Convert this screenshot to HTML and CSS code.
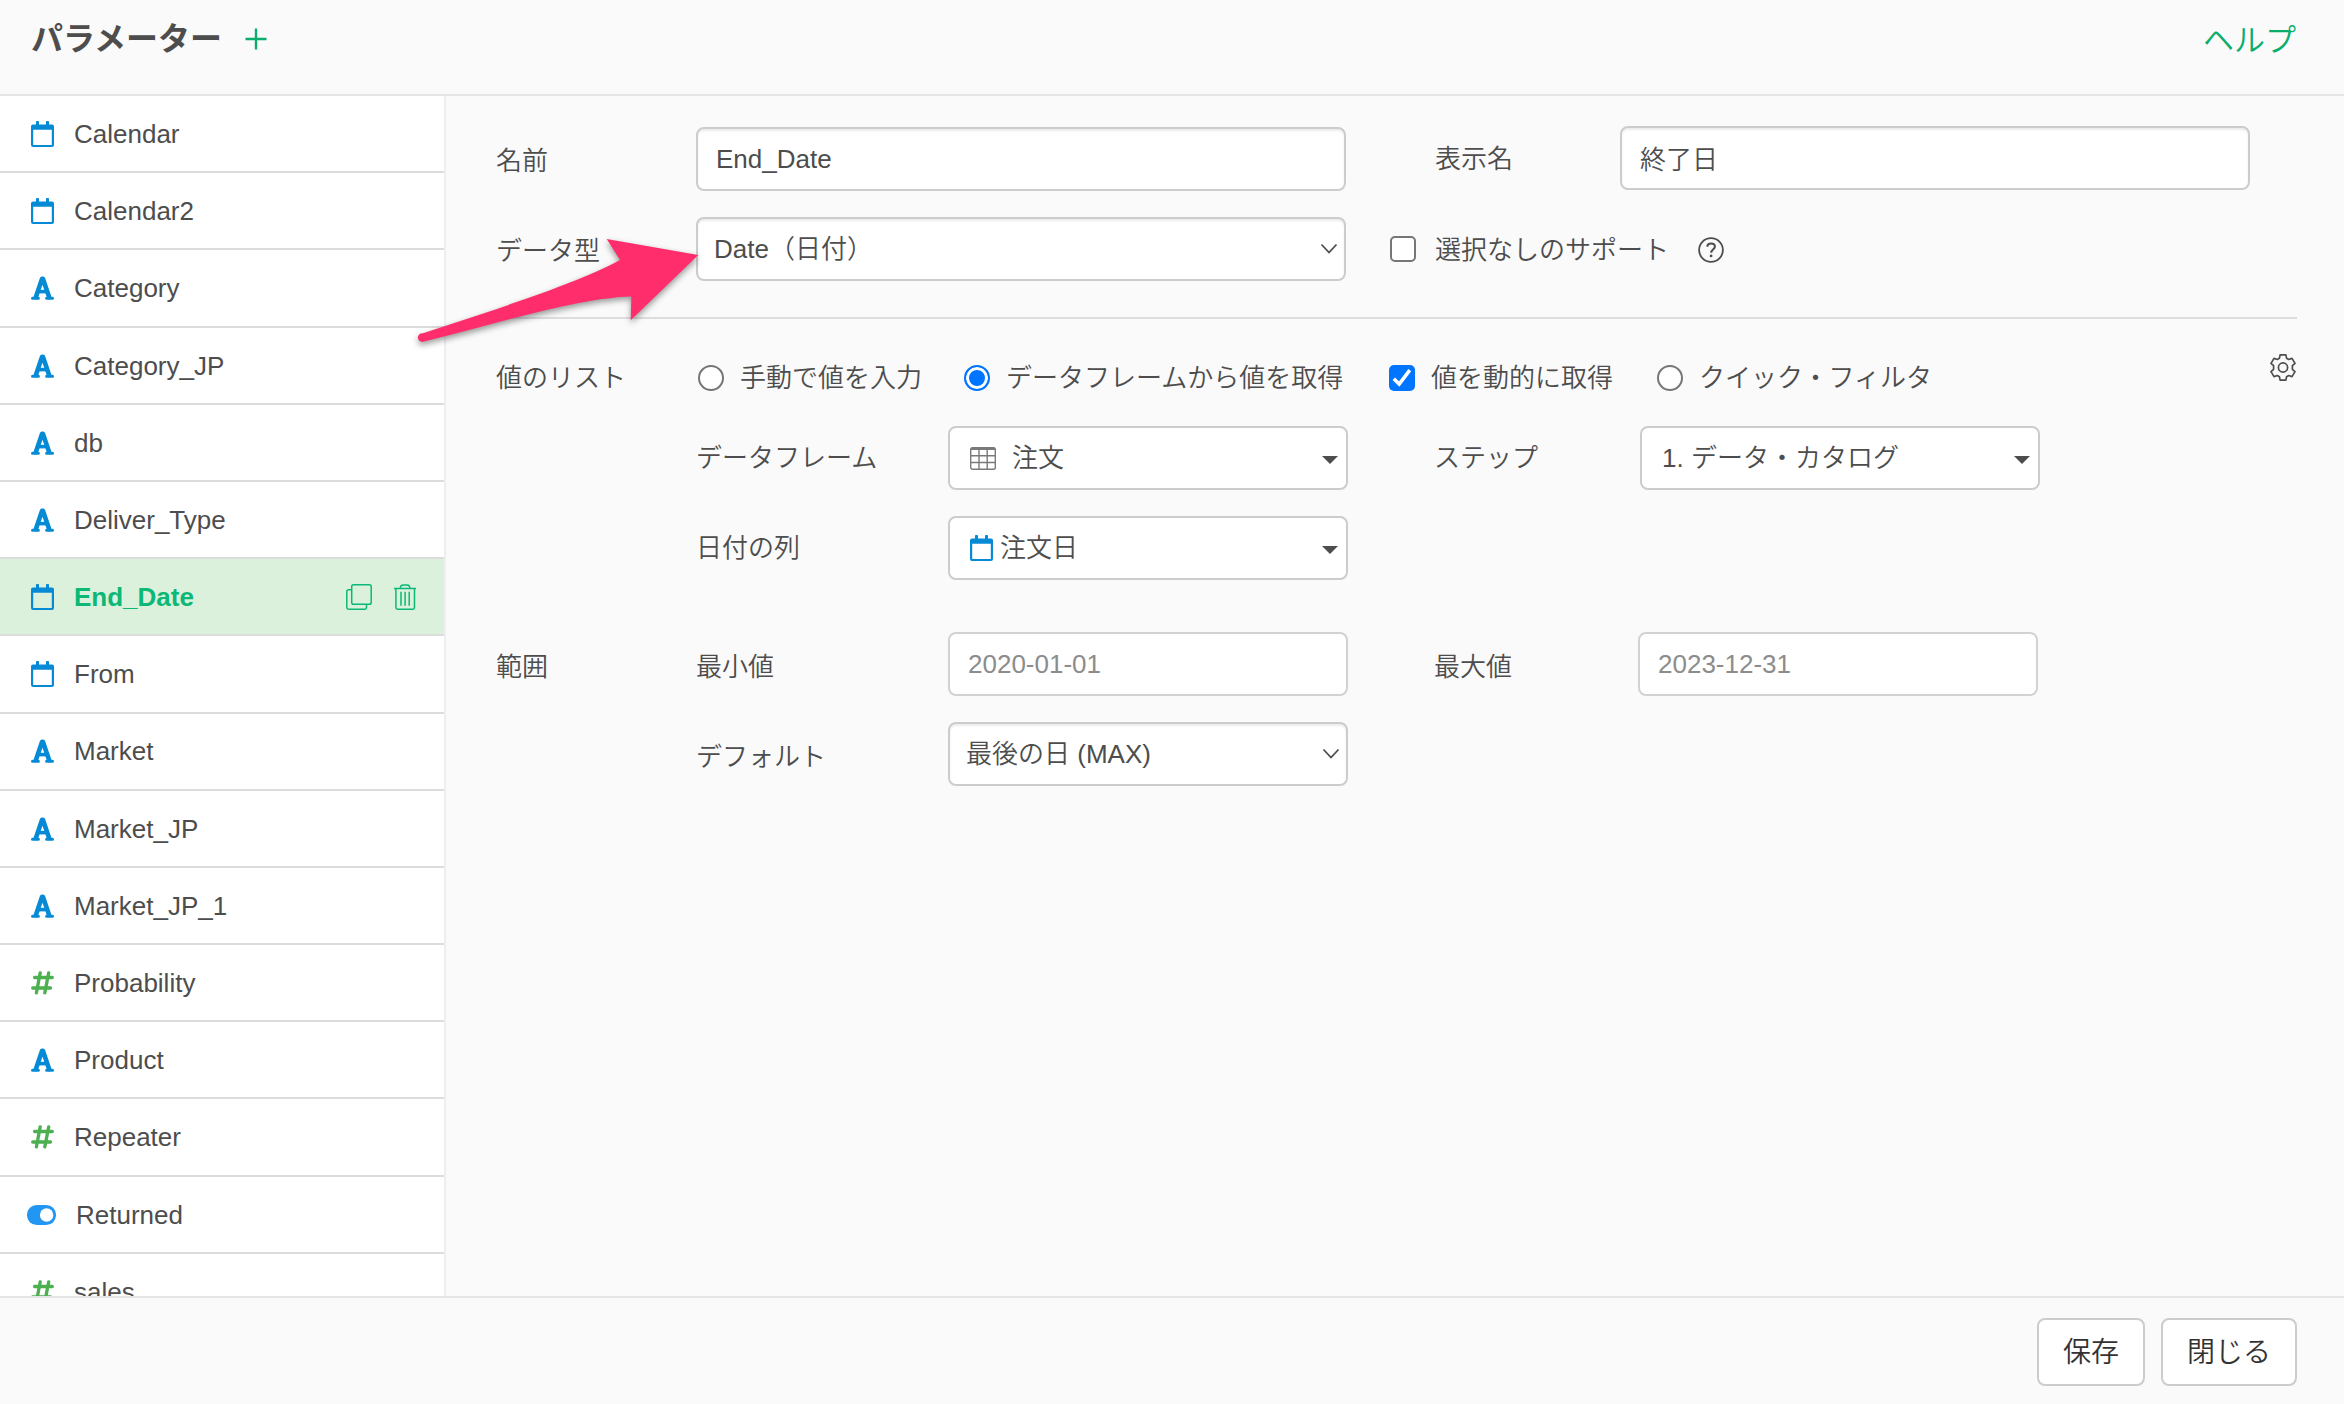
FILE: index.html
```html
<!DOCTYPE html>
<html lang="ja">
<head>
    <meta charset="UTF-8">
    <meta name="viewport" content="width=device-width, initial-scale=1.0">
    <title>パラメーター</title>
    <link rel="stylesheet" href="styles.css">
</head>
<body>
    <!-- アイコン -->
    <svg class="icon-defs" width="0" height="0">
        <symbol id="icon-date" viewBox="0 0 23 26">
            <path fill="currentColor" fill-rule="evenodd" d="M5 3.5V1.2a1.5 1.5 0 0 1 3 0V3.5H15V1.2a1.5 1.5 0 0 1 3 0V3.5H21a2 2 0 0 1 2 2V24a2 2 0 0 1-2 2H2a2 2 0 0 1-2-2V5.500a2 2 0 0 1 2-2ZM2.200 8.700V24H20.800V8.700Z"/>
        </symbol>
        <symbol id="icon-text" viewBox="0 0 23 24">
            <g fill="none" stroke="currentColor" stroke-linecap="round" stroke-linejoin="round">
                <path stroke-width="4.600" d="M4.900 21L11 2.900H12L18.100 21"/>
                <path stroke-width="3.600" stroke-linecap="butt" d="M7 15.600H16"/>
                <path stroke-width="3" d="M1.500 22.200H7.400M15.600 22.200H21.500"/>
            </g>
        </symbol>
        <symbol id="icon-number" viewBox="0 0 23 24">
            <path fill="none" stroke="currentColor" stroke-width="3.300" stroke-linecap="round" d="M3.600 6.500H21.300M1.700 17H19.500M9.200 1.900L5.400 21.900M17.700 1.900L13.800 21.900"/>
        </symbol>
        <symbol id="icon-toggle" viewBox="0 0 29 20">
            <rect width="29" height="20" rx="9.800" fill="currentColor"/>
            <circle cx="19.600" cy="10" r="6.700" fill="#fff"/>
        </symbol>
        <symbol id="icon-copy" viewBox="0 0 26 26">
            <g fill="none" stroke="currentColor" stroke-width="1.500">
                <rect x="5.700" y="0.800" width="19.500" height="19.500" rx="1.800"/>
                <path d="M5.700 5.700H2.500a1.700 1.700 0 0 0-1.700 1.700V23.500a1.700 1.700 0 0 0 1.700 1.700H18.800a1.700 1.700 0 0 0 1.700-1.700V20.300"/>
            </g>
        </symbol>
        <symbol id="icon-trash" viewBox="0 0 22 26">
            <path fill="none" stroke="currentColor" stroke-width="1.500" d="M0 4.400H22M1.900 4.400V23.500a1.700 1.700 0 0 0 1.700 1.700H18.800a1.700 1.700 0 0 0 1.700-1.700V4.400M6.300 4.400C6.300 2 7.500 0.900 9.200 0.900H13C14.700 0.900 15.900 2 15.900 4.400M7 7.800V21.800M11.100 7.800V21.800M15.200 7.800V21.800"/>
        </symbol>
        <symbol id="icon-chevron" viewBox="0 0 18 12">
            <path fill="none" stroke="currentColor" stroke-width="1.800" d="M1.500 1.500L9 9.500L16.500 1.500"/>
        </symbol>
        <symbol id="icon-caret" viewBox="0 0 16 8">
            <path fill="currentColor" d="M0 0H16L8 8Z"/>
        </symbol>
    </svg>

    <header class="header">
        <h1 class="title">パラメーター</h1>
        <svg class="add" viewBox="0 0 22 22"><path stroke="currentColor" stroke-width="2.400" d="M0.500 11H21.500M11 0.500V21.500"/></svg>
        <a class="help-link">ヘルプ</a>
    </header>

    <div class="content">
        <ul class="parameters">
            <li><svg class="icon date"><use href="#icon-date"/></svg>Calendar</li>
            <li><svg class="icon date"><use href="#icon-date"/></svg>Calendar2</li>
            <li><svg class="icon text"><use href="#icon-text"/></svg>Category</li>
            <li><svg class="icon text"><use href="#icon-text"/></svg>Category_JP</li>
            <li><svg class="icon text"><use href="#icon-text"/></svg>db</li>
            <li><svg class="icon text"><use href="#icon-text"/></svg>Deliver_Type</li>
            <li class="selected">
                <svg class="icon date"><use href="#icon-date"/></svg>End_Date
                <span class="actions">
                    <svg class="copy"><use href="#icon-copy"/></svg>
                    <svg class="trash"><use href="#icon-trash"/></svg>
                </span>
            </li>
            <li><svg class="icon date"><use href="#icon-date"/></svg>From</li>
            <li><svg class="icon text"><use href="#icon-text"/></svg>Market</li>
            <li><svg class="icon text"><use href="#icon-text"/></svg>Market_JP</li>
            <li><svg class="icon text"><use href="#icon-text"/></svg>Market_JP_1</li>
            <li><svg class="icon number"><use href="#icon-number"/></svg>Probability</li>
            <li><svg class="icon text"><use href="#icon-text"/></svg>Product</li>
            <li><svg class="icon number"><use href="#icon-number"/></svg>Repeater</li>
            <li><svg class="icon toggle"><use href="#icon-toggle"/></svg>Returned</li>
            <li><svg class="icon number"><use href="#icon-number"/></svg>sales</li>
        </ul>

        <main class="form">
            <section class="basic">
                <div class="column">
                    <div class="row">
                        <label>名前</label>
                        <input class="field" type="text" value="End_Date">
                    </div>
                    <div class="row">
                        <label>データ型</label>
                        <div class="field select">Date（日付）<svg class="chevron"><use href="#icon-chevron"/></svg></div>
                    </div>
                </div>
                <div class="column display">
                    <div class="row">
                        <label>表示名</label>
                        <input class="field" type="text" value="終了日">
                    </div>
                    <div class="row support">
                        <input class="check" type="checkbox">
                        <span>選択なしのサポート</span>
                        <svg class="question" viewBox="0 0 26 26">
                            <g fill="none" stroke="currentColor" stroke-width="1.800">
                                <circle cx="13" cy="13" r="11.900"/>
                                <path stroke-width="2" d="M9.300 9.800C9.400 7.700 11 6.600 13.100 6.600C15.300 6.600 16.900 7.800 16.900 9.700C16.900 12.200 13.200 12.500 13.200 15.800"/>
                            </g>
                            <circle cx="13.100" cy="18.900" r="1.400" fill="currentColor"/>
                        </svg>
                    </div>
                </div>
            </section>

            <section class="values">
                <div class="row sources">
                    <label>値のリスト</label>
                    <input class="radio" type="radio" name="source">
                    <span class="manual">手動で値を入力</span>
                    <input class="radio" type="radio" name="source" checked>
                    <span class="frame">データフレームから値を取得</span>
                    <span class="check checked"><svg viewBox="0 0 26 26"><path fill="none" stroke="#fff" stroke-width="3.600" d="M4.800 13.800L10.200 19L20.800 5.200"/></svg></span>
                    <span class="dynamic">値を動的に取得</span>
                    <input class="radio" type="radio" name="source">
                    <span>クイック・フィルタ</span>
                    <svg class="gear" viewBox="0 0 26 27">
                        <g fill="none" stroke="currentColor" stroke-width="1.700" stroke-linejoin="round">
                            <circle cx="13" cy="13.500" r="4.600"/>
                            <path d="M10.100 0.900H15.900L16.600 4.300L18.700 5.500L22 4.400L25 9.400L22.400 11.700V15.300L25 17.600L22 22.600L18.700 21.500L16.600 22.700L15.900 26.100H10.100L9.400 22.700L7.300 21.500L4 22.600L1 17.600L3.600 15.300V11.700L1 9.400L4 4.400L7.300 5.500L9.400 4.300Z"/>
                        </g>
                    </svg>
                </div>
                <div class="grid">
                    <label class="start">データフレーム</label>
                    <div class="field picker">
                        <svg class="table" viewBox="0 0 26 23">
                            <path fill="none" stroke="currentColor" stroke-width="1.400" d="M2.500 0.700H23.500a1.800 1.800 0 0 1 1.800 1.800V20.500a1.800 1.800 0 0 1-1.800 1.800H2.500a1.800 1.800 0 0 1-1.800-1.800V2.500a1.800 1.800 0 0 1 1.800-1.800ZM9 2V22M17.200 2V22M1 8.800H25M1 15.500H25"/>
                            <path fill="currentColor" d="M1 3V2a1.500 1.500 0 0 1 1.500-1.500H23.500a1.500 1.500 0 0 1 1.500 1.500V3Z"/>
                        </svg>注文<svg class="caret"><use href="#icon-caret"/></svg>
                    </div>
                    <label>ステップ</label>
                    <div class="field picker step">1. データ・カタログ<svg class="caret"><use href="#icon-caret"/></svg></div>
                    <label class="start">日付の列</label>
                    <div class="field picker"><svg class="icon date"><use href="#icon-date"/></svg>注文日<svg class="caret"><use href="#icon-caret"/></svg></div>
                </div>
            </section>

            <section class="grid range">
                <label>範囲</label>
                <label>最小値</label>
                <input class="field" type="text" value="2020-01-01" disabled>
                <label>最大値</label>
                <input class="field max" type="text" value="2023-12-31" disabled>
                <label class="start">デフォルト</label>
                <div class="field select">最後の日 (MAX)<svg class="chevron"><use href="#icon-chevron"/></svg></div>
            </section>
        </main>
    </div>

    <footer class="footer">
        <button class="button">保存</button>
        <button class="button">閉じる</button>
    </footer>

    <!-- データ型を指す矢印 -->
    <svg class="arrow" viewBox="0 0 290 100">
        <path fill="#ff2d6c" d="M282.300 25L190.700 9L204 30C160 54 80 79 7 103.300L4.500 103.600A3.900 3.900 0 0 0 8 111.500C80 94 160 68 215.300 66.500L214.700 90.300Z"/>
    </svg>
</body>
</html>
```

FILE: styles.css
```css
* {
    box-sizing: border-box;
}

body {
    margin: 0;
    height: 1404px;
    display: flex;
    flex-direction: column;
    overflow: hidden;
    background-color: #fafafa;
    color: #4d4d4d;
    font-family: "Liberation Sans", "Noto Sans CJK JP", sans-serif;
    font-size: 26px;
    font-weight: 350;
    line-height: 38px;
}

.icon-defs {
    position: absolute;
}

.header {
    flex: none;
    display: flex;
    height: 96px;
    padding: 20px 48px 0 31px;
    border-bottom: 2px solid #e5e5e5;
}

.title {
    margin: 0;
    font-size: 32px;
    font-weight: bold;
}

.add {
    width: 22px;
    height: 22px;
    margin: 8px 0 0 23px;
    color: #0aad6c;
}

.help-link {
    margin: 2px 0 0 auto;
    font-size: 31px;
    color: #0aad6c;
}

.content {
    flex: none;
    display: flex;
    height: 1200px;
}

.parameters {
    width: 446px;
    margin: 0;
    padding: 0;
    overflow: hidden;
    list-style: none;
    background-color: #fff;
    border-right: 2px solid #eee;
}

.parameters li {
    display: flex;
    align-items: center;
    height: 77.2px;
    padding: 0.8px 0 0 31px;
    border-bottom: 2px solid #dcdcdc;
}

.parameters .selected {
    background-color: #dbf1dc;
    color: #0bb877;
    font-weight: bold;
}

.icon {
    width: 23px;
    height: 24px;
    margin-right: 20px;
}

.date {
    height: 26px;
    color: #068ad6;
}

.text {
    color: #068ad6;
}

.number {
    color: #4caf50;
}

.toggle {
    width: 29px;
    height: 20px;
    margin-left: -4px;
    color: #2196f3;
}

.actions {
    display: flex;
    margin-left: auto;
    padding-right: 28px;
    gap: 22px;
}

.copy {
    width: 26px;
    height: 26px;
}

.trash {
    width: 22px;
    height: 26px;
}

.form {
    flex: 1;
    padding: 30px 47px 0 50px;
}

.basic {
    display: flex;
    gap: 44px;
    height: 193px;
    border-bottom: 2px solid #ddd;
}

.column {
    display: flex;
    flex-direction: column;
    gap: 26px;
    padding-top: 1px;
}

.row {
    display: flex;
    align-items: center;
    height: 64px;
}

.basic label {
    width: 200px;
    padding-top: 3px;
}

.basic .field {
    width: 650px;
}

.display {
    padding-top: 0;
}

.basic .display label {
    width: 230px;
    padding: 1px 0 0 45px;
}

.basic .display .field {
    width: 630px;
    padding-bottom: 2px;
}

.support {
    padding-top: 2px;
}

.display span {
    margin-left: 19px;
    padding-top: 1px;
}

.field {
    display: flex;
    align-items: center;
    height: 64px;
    padding: 0 18px;
    border: 2px solid #ccc;
    border-radius: 8px;
    background-color: #fff;
    box-shadow: inset 0 2px 2px rgba(0, 0, 0, 0.075);
    color: inherit;
    font: inherit;
}

.field:disabled {
    border-color: #d2d2d2;
    box-shadow: none;
    color: #8c8c8c;
}

.select {
    padding: 0 6px 0 16px;
}

.picker {
    padding: 0 8px 0 20px;
    box-shadow: none;
}

.chevron {
    width: 18px;
    height: 12px;
    margin-left: auto;
}

.caret {
    width: 16px;
    height: 8px;
    margin: 3px 0 0 auto;
}

.picker .icon {
    margin-right: 7px;
}

.table {
    width: 26px;
    height: 23px;
    margin-right: 16px;
    color: #7a7a7a;
}

.check,
.radio {
    appearance: none;
    flex: none;
    width: 26px;
    height: 26px;
    margin: 0;
    border: 2px solid #767676;
    background-color: #fff;
}

.check {
    border-radius: 5px;
}

.checked {
    border: none;
    background-color: #0075ff;
}

.checked svg {
    display: block;
}

.radio {
    border-radius: 50%;
}

.radio:checked {
    border-color: #0075ff;
    background-color: #0075ff;
    box-shadow: inset 0 0 0 3px #fff;
}

.question {
    width: 26px;
    height: 26px;
    margin: 1px 0 0 29px;
}

.sources {
    height: 26px;
    margin-top: 46px;
}

.sources label {
    width: 202px;
}

.sources span:not(.check) {
    margin-left: 16px;
}

.sources .manual {
    width: 224px;
}

.sources .frame {
    width: 383px;
}

.sources .dynamic {
    width: 226px;
}

.gear {
    width: 26px;
    height: 27px;
    margin: -21px 1px 0 auto;
}

.grid {
    display: grid;
    grid-template-columns: 200px 252px 400px 292px 400px;
    row-gap: 26px;
    align-items: center;
    margin-top: 35px;
}

.start {
    grid-column: 2;
}

.field + label {
    padding-left: 86px;
}

.field + label.start {
    padding-left: 0;
}

.range {
    margin-top: 52px;
}

.range label {
    padding-top: 5px;
}

.max {
    margin-left: -2px;
    width: 400px;
}

.footer {
    display: flex;
    justify-content: flex-end;
    align-items: flex-start;
    gap: 16px;
    height: 108px;
    padding: 20px 47px 0 0;
    border-top: 2px solid #e5e5e5;
}

.button {
    height: 68px;
    padding: 1px 24px 0;
    border: 2px solid #ccc;
    border-radius: 8px;
    background-color: #fff;
    color: #333;
    font: inherit;
    font-size: 28px;
}

.arrow {
    position: absolute;
    left: 416px;
    top: 230px;
    width: 290px;
    height: 100px;
    overflow: visible;
    filter: drop-shadow(0 3px 3px rgba(0, 0, 0, 0.4));
}
```
